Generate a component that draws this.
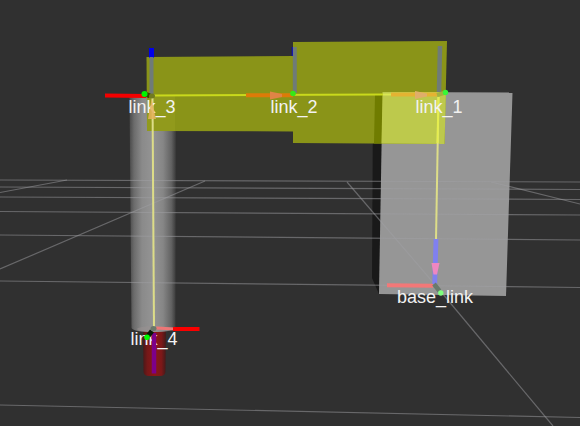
const gridLines = [
  [0, 180, 580, 182],
  [0, 187, 580, 189.5],
  [0, 197, 580, 199.5],
  [0, 211.5, 580, 215],
  [0, 235, 580, 240],
  [0, 281, 580, 287.5],
  [0, 405, 580, 417.5],
  [0, 192.5, 67, 180],
  [0, 269, 205, 181],
  [347, 182, 437, 287],
  [437, 287, 553, 426],
  [491, 182, 580, 204],
];

const labels = [
  { name: "link_3", x: 152, y: 113 },
  { name: "link_2", x: 294, y: 113 },
  { name: "link_1", x: 439, y: 113 },
  { name: "base_link", x: 435, y: 303 },
];

function Label({ name, x, y }) {
  return (
    <text
      x={x}
      y={y}
      textAnchor="middle"
      className="fill-[#f2f2f2] text-[18px] font-['Liberation_Sans',Arial,sans-serif]"
    >
      {name}
    </text>
  );
}

function Grid() {
  return (
    <g stroke="#a0a0a4" strokeOpacity="0.5" strokeWidth="1.2">
      {gridLines.map(([x1, y1, x2, y2], i) => (
        <line key={i} x1={x1} y1={y1} x2={x2} y2={y2} />
      ))}
    </g>
  );
}

export default function App() {
  return (
    <main className="min-h-screen w-full overflow-hidden bg-[#303030]">
      <svg viewBox="0 0 580 426" className="block h-auto w-full" role="img" aria-label="Robot model">
        <defs>
          <linearGradient id="arm">
            <stop offset="0" stopColor="#4a4a4a" />
            <stop offset="0.1" stopColor="#6c6c6c" />
            <stop offset="0.27" stopColor="#8a8a8a" />
            <stop offset="0.5" stopColor="#949494" />
            <stop offset="0.72" stopColor="#868686" />
            <stop offset="0.9" stopColor="#626262" />
            <stop offset="1" stopColor="#383838" />
          </linearGradient>
          <linearGradient id="tool">
            <stop offset="0" stopColor="#4a1818" />
            <stop offset="0.2" stopColor="#761818" />
            <stop offset="0.5" stopColor="#8c1717" />
            <stop offset="0.8" stopColor="#7c1818" />
            <stop offset="1" stopColor="#421a1a" />
          </linearGradient>
        </defs>

        {/* base box */}
        <path d="M373 95 H383 L379 294 L372 278 Z" fill="#191919" />
        <path d="M382.5 92 L512.5 92.5 L506 296 L379 294 Z" fill="#969696" />

        {/* tool cylinder */}
        <path d="M143 330 H166 L165.5 372 Q165 376 160 376 H149 Q144 376 143.5 372 Z" fill="url(#tool)" />

        {/* cylindrical arm */}
        <path d="M129.5 96 Q153 93 176 96 L175.5 328 Q172 332 153 332 Q134 332 131.5 328 Z" fill="url(#arm)" />
        <ellipse cx="154" cy="329" rx="17" ry="3" fill="#999292" fillOpacity="0.5" />
        <Grid />

        {/* upper links */}
        <path d="M146.5 57 L293.5 56 V131.5 L147 131 Z" fill="#8a9418" />
        <path d="M293 42 L447 41 L444.5 144 L293 143 Z" fill="#8a9418" />
        <path d="M375 95 H383 L381.5 143.5 H374 Z" fill="#707c00" />
        <path d="M382.5 92 H446 L444.5 144 L381.5 143.5 Z" fill="#bdc94c" />
        <path d="M147 96 H175 V131 H147 Z" fill="#a1a928" opacity="0.3" />

        {/* frame connections */}
        <path d="M152 95.5 L383 94.5" stroke="#c9d91c" strokeWidth="2" fill="none" />
        <path d="M152.5 97 L154 329" stroke="#dddd88" strokeWidth="2" fill="none" />
        <path d="M438.5 97 L436 240" stroke="#dddd88" strokeWidth="2" fill="none" />
        <path d="M438.5 97 L437.5 143" stroke="#e5ee4d" strokeWidth="2" fill="none" />

        {labels.map((label) => (
          <Label key={label.name} {...label} />
        ))}
        <Label name="link_4" x={154} y={345} />

        {/* link_3 frame */}
        <path d="M105 95.5 L146 96" stroke="#f40000" strokeWidth="4" />
        <path d="M151.5 48 V58" stroke="#0000ec" strokeWidth="5" />
        <path d="M151.5 57 V95" stroke="#6f7b78" strokeWidth="4" />
        <path d="M145 94 L150 96" stroke="#384600" strokeWidth="5" />
        <ellipse cx="152" cy="96" rx="3" ry="2.5" fill="#717b20" />
        <path d="M151.5 99 L156 119 H148 Z" fill="#e5b25b" fillOpacity="0.85" />
        <circle cx="144.5" cy="94" r="3" fill="#00f500" />

        {/* link_2 frame */}
        <path d="M246 95.3 H293" stroke="#dd7b08" strokeWidth="4" />
        <path d="M270 91.5 L282 94 V97 L270 99.5 Z" fill="#df8446" />
        <path d="M293 47 V56" stroke="#0000bb" strokeWidth="2.5" />
        <path d="M294.8 47 V93" stroke="#6f7b78" strokeWidth="4" />
        <circle cx="293" cy="93.5" r="2.8" fill="#35e817" />

        {/* link_1 frame */}
        <path d="M383 94.5 H391" stroke="#d9e752" strokeWidth="2" />
        <path d="M391 94.5 H437" stroke="#e4b332" strokeWidth="4" />
        <path d="M415 91 L427 93.5 V96.5 L415 99 Z" fill="#dfae6a" />
        <path d="M440 46 L439 92" stroke="#6f7b78" strokeWidth="4.5" />
        <path d="M437 95 L444 93" stroke="#a3b13e" strokeWidth="4" />
        <circle cx="445.5" cy="92.5" r="2.7" fill="#37f737" />

        {/* base frame */}
        <path d="M387 285.3 L433 285.8" stroke="#f27878" strokeWidth="4" />
        <path d="M436 239 L434.7 284" stroke="#8080ef" strokeWidth="4.8" />
        <path d="M431.5 263 H439.5 L437 274.5 H433.5 Z" fill="#ee87c1" />
        <path d="M434 284 L439.5 291" stroke="#6a7a6d" strokeWidth="4.5" />
        <circle cx="440.8" cy="293" r="2.7" fill="#7eff7e" />

        {/* link_4 frame */}
        <path d="M156 328 L175 329" stroke="#ed7777" strokeWidth="3" />
        <path d="M173 329 L199.5 329" stroke="#fa0000" strokeWidth="4" />
        <path d="M154 333 V373.5" stroke="#7c0089" strokeWidth="4.5" />
        <path d="M152 331 L148 336" stroke="#051a05" strokeWidth="5" />
        <ellipse cx="153.5" cy="328.5" rx="3" ry="2.5" fill="#6a786a" />
        <circle cx="147" cy="337.2" r="2.8" fill="#00fb00" />
      </svg>
    </main>
  );
}
